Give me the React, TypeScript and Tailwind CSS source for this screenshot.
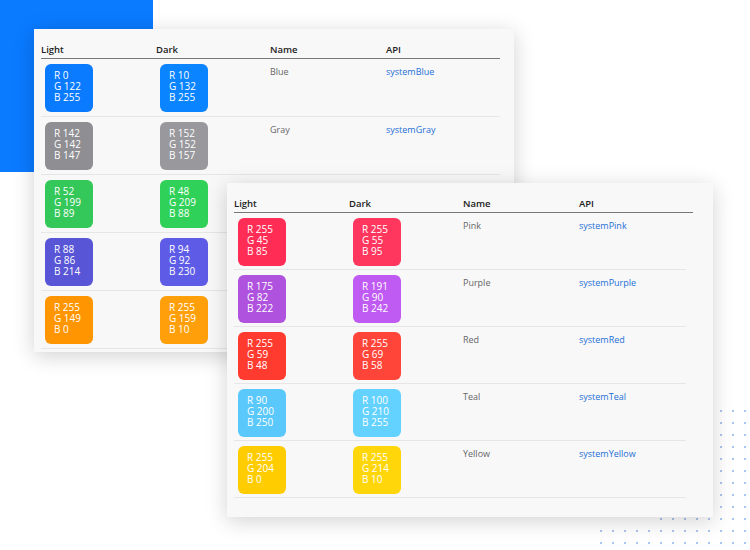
const rows1 = [
  { l: "#0a7aff", d: "#0a84ff", lv: ["R 0", "G 122", "B 255"], dv: ["R 10", "G 132", "B 255"], n: "Blue", a: "systemBlue" },
  { l: "#8e8e93", d: "#98989d", lv: ["R 142", "G 142", "B 147"], dv: ["R 152", "G 152", "B 157"], n: "Gray", a: "systemGray" },
  { l: "#34c759", d: "#30d158", lv: ["R 52", "G 199", "B 89"], dv: ["R 48", "G 209", "B 88"], n: "Green", a: "systemGreen" },
  { l: "#5856d6", d: "#5e5ce6", lv: ["R 88", "G 86", "B 214"], dv: ["R 94", "G 92", "B 230"], n: "Indigo", a: "systemIndigo" },
  { l: "#ff9500", d: "#ff9f0a", lv: ["R 255", "G 149", "B 0"], dv: ["R 255", "G 159", "B 10"], n: "Orange", a: "systemOrange" },
];
const rows2 = [
  { l: "#ff2d55", d: "#ff375f", lv: ["R 255", "G 45", "B 85"], dv: ["R 255", "G 55", "B 95"], n: "Pink", a: "systemPink" },
  { l: "#af52de", d: "#bf5af2", lv: ["R 175", "G 82", "B 222"], dv: ["R 191", "G 90", "B 242"], n: "Purple", a: "systemPurple" },
  { l: "#ff3b30", d: "#ff453a", lv: ["R 255", "G 59", "B 48"], dv: ["R 255", "G 69", "B 58"], n: "Red", a: "systemRed" },
  { l: "#5ac8fa", d: "#64d2ff", lv: ["R 90", "G 200", "B 250"], dv: ["R 100", "G 210", "B 255"], n: "Teal", a: "systemTeal" },
  { l: "#ffcc00", d: "#ffd60a", lv: ["R 255", "G 204", "B 0"], dv: ["R 255", "G 214", "B 10"], n: "Yellow", a: "systemYellow" },
];

function Swatch({ c, v }: { c: string; v: string[] }) {
  return (
    <div className="w-[48px] h-[48px] rounded-[6px] pl-[9px] pt-[6px] text-white text-[10px] leading-[11px]" style={{ background: c }}>
      {v.map((t) => (<div key={t}>{t}</div>))}
    </div>
  );
}

function Table({ rows, lineW, sepW, rowH }: { rows: typeof rows1; lineW: string; sepW: string; rowH: string }) {
  return (
    <div>
      <div className={`flex text-[9.5px] font-semibold text-[#222] leading-[12px] pb-[2px] border-b border-[#777] ${lineW}`}>
        <div className="w-[115px]">Light</div>
        <div className="w-[114px]">Dark</div>
        <div className="w-[116px]">Name</div>
        <div>API</div>
      </div>
      {rows.map((r) => (
        <div key={r.n} className={`flex ${rowH} pt-[5px] border-b border-[#e6e6e6] ${sepW}`}>
          <div className="w-[115px] pl-[4px]"><Swatch c={r.l} v={r.lv} /></div>
          <div className="w-[114px] pl-[4px]"><Swatch c={r.d} v={r.dv} /></div>
          <div className="w-[116px] pt-[1px] text-[9px] text-[#666]">{r.n}</div>
          <div className="pt-[1px] text-[9px] text-[#1d6fd6]">{r.a}</div>
        </div>
      ))}
    </div>
  );
}

export default function App() {
  return (
    <div className="relative w-[750px] h-[550px] bg-white overflow-hidden" style={{ fontFamily: "'Open Sans', 'Liberation Sans', sans-serif" }}>
      <div className="absolute left-0 top-0 w-[153px] h-[172px] bg-[#0a7aff]" />
      <div className="absolute left-[595px] top-[405px] w-[155px] h-[145px] bg-[radial-gradient(circle,#a9c4ef_1.2px,transparent_1.4px)] bg-[length:12px_12px]" style={{ clipPath: "polygon(40% 0, 100% 0, 100% 100%, 0 100%, 0 85%, 40% 85%)" }} />
      <div className="absolute left-[34px] top-[29px] w-[480px] h-[323px] bg-[#f8f8f8] shadow-[0_4px_20px_rgba(0,0,0,0.18)] pl-[7px] pt-[15px] overflow-hidden">
        <Table rows={rows1} lineW="w-[459px]" sepW="w-[459px]" rowH="h-[58px]" />
      </div>
      <div className="absolute left-[227px] top-[183px] w-[486px] h-[334px] bg-[#f8f8f8] shadow-[0_4px_20px_rgba(0,0,0,0.18)] pl-[7px] pt-[15px] overflow-hidden">
        <Table rows={rows2} lineW="w-[459px]" sepW="w-[452px]" rowH="h-[57px]" />
      </div>
    </div>
  );
}
